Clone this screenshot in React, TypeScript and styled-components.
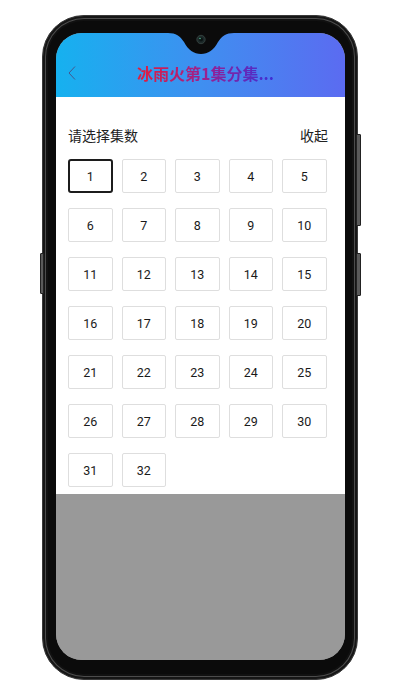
import React, { FC } from 'react';
import styled, { createGlobalStyle } from 'styled-components';

const Global = createGlobalStyle`
  html, body {
    margin: 0;
    padding: 0;
    background: #ffffff;
  }
  body {
    font-family: "Noto Sans CJK SC", "Noto Sans", sans-serif;
  }
`;

const Page = styled.div`
  width: 393px;
  height: 700px;
  box-sizing: border-box;
  padding: 15px 0 0 42px;
`;

const Phone = styled.div`
  position: relative;
  width: 316px;
  height: 665px;
  box-sizing: border-box;
  padding: 17px 14px 21px 13px;
  border-radius: 42px;
  background: #0b0b0b;
  border: 1.5px solid #3a3a3a;
  box-shadow: inset 0 0 0 2px #161616, inset 0 0 0 3px #4c4c4c, inset 0 0 0 5px #111;
`;

const SideKey = styled.div<{ side: 'left' | 'right'; top: number; len: number }>`
  position: absolute;
  ${(p) => (p.side === 'left' ? 'left: -3.5px;' : 'right: -3.5px;')}
  top: ${(p) => p.top}px;
  width: 2.5px;
  height: ${(p) => p.len}px;
  background: #5a5a5a;
  border: 0.5px solid #222;
  border-radius: 1px;
`;

const Screen = styled.div`
  position: relative;
  width: 289px;
  height: 627px;
  border-radius: 26px;
  overflow: hidden;
  background: #999999;
  display: flex;
  flex-direction: column;
`;

const Notch = styled.svg`
  position: absolute;
  top: 0;
  left: 50%;
  margin-left: -33px;
  width: 66px;
  height: 22px;
`;

const Header = styled.div`
  height: 64px;
  flex-shrink: 0;
  display: flex;
  align-items: flex-end;
  box-sizing: border-box;
  padding: 0 0 14px 12px;
  background: linear-gradient(90deg, #16b1ef 0%, #3f8ff0 50%, #5b6bf1 100%);
`;

const Back = styled.div`
  width: 14px;
  height: 20px;
  display: flex;
  align-items: center;
`;

const Title = styled.div`
  flex: 1;
  text-align: center;
  padding-right: 16px;
  font-size: 16px;
  font-weight: 700;
  line-height: 20px;
  span {
    background: linear-gradient(90deg, #e21e3c 0%, #9a2090 50%, #3b2fd6 100%);
    -webkit-background-clip: text;
    background-clip: text;
    color: transparent;
  }
`;

const Panel = styled.div`
  background: #ffffff;
  padding: 28px 17px 7px 12px;
`;

const Bar = styled.div`
  display: flex;
  justify-content: space-between;
  align-items: center;
  height: 20px;
  font-size: 14px;
  color: #222;
  margin-bottom: 14px;
`;

const Grid = styled.div`
  display: grid;
  grid-template-columns: repeat(5, 44.5px);
  grid-auto-rows: 34px;
  column-gap: 9px;
  row-gap: 15px;
`;

const Cell = styled.div<{ active?: boolean }>`
  box-sizing: border-box;
  display: flex;
  align-items: center;
  justify-content: center;
  font-family: Roboto, "Noto Sans", sans-serif;
  font-size: 12.5px;
  color: #1a1a1a;
  border-radius: ${(p) => (p.active ? '3px' : '2px')};
  border: ${(p) => (p.active ? '2px solid #1c1c1c' : '1px solid #dedede')};
`;

const Rest = styled.div`
  flex: 1;
  background: #999999;
`;

const episodes = Array.from({ length: 32 }, (_, i) => i + 1);

const App: FC = () => {
  return (
    <Page>
      <Global />
      <Phone>
        <SideKey side="left" top={237} len={39} />
        <SideKey side="right" top={118} len={90} />
        <SideKey side="right" top={237} len={41} />
        <Screen>
          <Header>
            <Back>
              <svg width="8" height="14" viewBox="0 0 8 14">
                <path d="M7 0.5 L1 7 L7 13.5" fill="none" stroke="#44578f" strokeWidth="1" />
              </svg>
            </Back>
            <Title>
              <span>冰雨火第1集分集...</span>
            </Title>
          </Header>
          <Panel>
            <Bar>
              <span>请选择集数</span>
              <span>收起</span>
            </Bar>
            <Grid>
              {episodes.map((n) => (
                <Cell key={n} active={n === 1}>
                  {n}
                </Cell>
              ))}
            </Grid>
          </Panel>
          <Rest />
          <Notch viewBox="0 0 66 22">
            <path
              d="M0 0 H66 C58 0 54 3 50 9 C46 17 40 21 33 21 C26 21 20 17 16 9 C12 3 8 0 0 0 Z"
              fill="#0b0b0b"
            />
            <circle cx="33" cy="6.5" r="4.2" fill="#1d2a2a" stroke="#3a4644" strokeWidth="0.8" />
            <circle cx="33" cy="6.5" r="2" fill="#0c1414" />
            <circle cx="32" cy="5.5" r="0.8" fill="#4fb58f" />
          </Notch>
        </Screen>
      </Phone>
    </Page>
  );
};

export default App;
